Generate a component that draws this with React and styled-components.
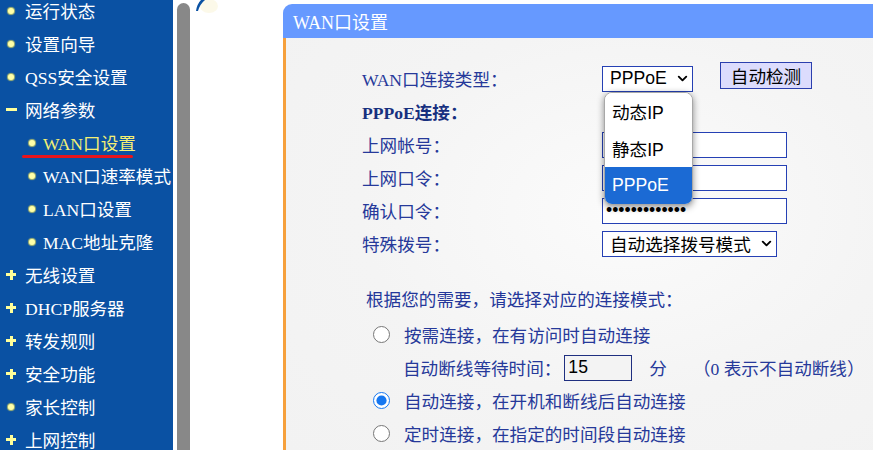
import React from "react";
import styled, {createGlobalStyle} from "styled-components";
import {ChevronDown} from "lucide-react";

const serif = `"Liberation Serif", "Noto Sans CJK SC", serif`;
const sans = `"Liberation Sans", "Noto Sans CJK SC", sans-serif`;

const menu = [
    {label: "运行状态", icon: "dot"},
    {label: "设置向导", icon: "dot"},
    {label: "QSS安全设置", icon: "dot"},
    {label: "网络参数", icon: "minus"},
    {label: "WAN口设置", icon: "dot", sub: true, active: true},
    {label: "WAN口速率模式", icon: "dot", sub: true},
    {label: "LAN口设置", icon: "dot", sub: true},
    {label: "MAC地址克隆", icon: "dot", sub: true},
    {label: "无线设置", icon: "plus"},
    {label: "DHCP服务器", icon: "plus"},
    {label: "转发规则", icon: "plus"},
    {label: "安全功能", icon: "plus"},
    {label: "家长控制", icon: "dot"},
    {label: "上网控制", icon: "plus"},
];

const fields = [
    {label: "上网帐号：", type: "text", value: ""},
    {label: "上网口令：", type: "password", value: "1234567890123"},
    {label: "确认口令：", type: "password", value: "1234567890123"},
];

const MenuIcon = ({kind}) => {
    if (kind === "plus") return <Plus/>;
    if (kind === "minus") return <Minus/>;
    return <Dot/>;
};

const App = () => {
    return (
        <>
            <GlobalStyle/>
            <Page>
                <Sidebar>
                    <Menu>
                        {menu.map((item) => (
                            <MenuItem key={item.label} $sub={item.sub} $active={item.active}>
                                <IconBox $sub={item.sub}>
                                    <MenuIcon kind={item.icon}/>
                                </IconBox>
                                {item.label}
                            </MenuItem>
                        ))}
                    </Menu>
                </Sidebar>
                <Main>
                    <Scrollbar/>
                    <Corner width="30" height="22" viewBox="0 0 30 22">
                        <ellipse cx="17" cy="6" rx="9" ry="7" fill="#fbf6df" opacity="0.7"/>
                        <path d="M13 0 Q8 4 6 11 L4 11 Q5 4 9 0 Z" fill="#0b52a3"/>
                    </Corner>
                    <Content>
                        <Panel>
                            <PanelHeader>WAN口设置</PanelHeader>
                            <PanelBody>
                                <Form>
                                    <Label>WAN口连接类型：</Label>
                                    <ControlRow>
                                        <SelectWrap>
                                            <SelectBox $width={91}>
                                                PPPoE
                                                <ChevronDown size={15} strokeWidth={3}/>
                                            </SelectBox>
                                            <Dropdown>
                                                <Option>动态IP</Option>
                                                <Option>静态IP</Option>
                                                <Option $selected>PPPoE</Option>
                                            </Dropdown>
                                        </SelectWrap>
                                        <Button>自动检测</Button>
                                    </ControlRow>

                                    <SectionTitle>PPPoE连接：</SectionTitle>

                                    {fields.map((f) => (
                                        <React.Fragment key={f.label}>
                                            <Label>{f.label}</Label>
                                            <ControlRow>
                                                <TextInput type={f.type} defaultValue={f.value} readOnly/>
                                            </ControlRow>
                                        </React.Fragment>
                                    ))}

                                    <Label>特殊拨号：</Label>
                                    <ControlRow>
                                        <SelectBox $width={175}>
                                            自动选择拨号模式
                                            <ChevronDown size={15} strokeWidth={3}/>
                                        </SelectBox>
                                    </ControlRow>
                                </Form>

                                <ModeSection>
                                    <Intro>根据您的需要，请选择对应的连接模式：</Intro>
                                    <RadioRow>
                                        <Radio type="radio" name="mode" readOnly/>
                                        按需连接，在有访问时自动连接
                                    </RadioRow>
                                    <DelayRow>
                                        自动断线等待时间：
                                        <DelayInput defaultValue="15" readOnly/>
                                        <Unit>分</Unit>
                                        <Hint>（0 表示不自动断线）</Hint>
                                    </DelayRow>
                                    <RadioRow>
                                        <Radio type="radio" name="mode" defaultChecked/>
                                        自动连接，在开机和断线后自动连接
                                    </RadioRow>
                                    <RadioRow>
                                        <Radio type="radio" name="mode" readOnly/>
                                        定时连接，在指定的时间段自动连接
                                    </RadioRow>
                                </ModeSection>
                            </PanelBody>
                        </Panel>
                    </Content>
                </Main>
            </Page>
        </>
    );
};

const GlobalStyle = createGlobalStyle`
  html, body {
    margin: 0;
    padding: 0;
    background: #fff;
    overflow: hidden;
  }

  body {
    font-family: ${serif};
  }
`;

const Page = styled.div`
  display: flex;
  width: 873px;
  height: 450px;
  overflow: hidden;
`;

const Sidebar = styled.nav`
  width: 173px;
  flex-shrink: 0;
  background-color: #0a51a3;
  overflow: hidden;
`;

const Menu = styled.ul`
  list-style: none;
  margin: -6px 0 0;
  padding: 0;
`;

const MenuItem = styled.li`
  position: relative;
  display: flex;
  align-items: center;
  height: 33px;
  padding-left: ${(p) => (p.$sub ? 25 : 4)}px;
  font-size: 17.6px;
  color: ${(p) => (p.$active ? "#f3ef74" : "#fff")};
  white-space: nowrap;

  &::after {
    content: "";
    display: ${(p) => (p.$active ? "block" : "none")};
    position: absolute;
    left: 22px;
    width: 111px;
    bottom: 1px;
    height: 3px;
    border-radius: 2px;
    background-color: #e8141c;
  }
`;

const IconBox = styled.span`
  display: flex;
  align-items: center;
  justify-content: center;
  width: 14px;
  margin-right: ${(p) => (p.$sub ? 4 : 7)}px;
`;

const Dot = styled.span`
  width: 6px;
  height: 6px;
  border-radius: 50%;
  background-color: #ffffa8;
  box-shadow: 0 0 1px 1px rgba(240, 230, 90, 0.7);
`;

const Minus = styled.span`
  width: 11px;
  height: 3px;
  background-color: #ffff9a;
`;

const Plus = styled.span`
  position: relative;
  width: 10px;
  height: 3px;
  background-color: #ffff9a;

  &::after {
    content: "";
    position: absolute;
    left: 3.5px;
    top: -3.5px;
    width: 3px;
    height: 10px;
    background-color: #ffff9a;
  }
`;

const Main = styled.div`
  position: relative;
  flex: 1;
  display: flex;
  background: #fff;
`;

const Scrollbar = styled.div`
  width: 13px;
  margin: 3px 0 0 4px;
  border-radius: 7px 7px 0 0;
  background-color: #888;
  flex-shrink: 0;
`;

const Corner = styled.svg`
  position: absolute;
  left: 19px;
  top: 0;
`;

const Content = styled.div`
  flex: 1;
  padding: 4px 0 0 93px;
  min-width: 0;
`;

const Panel = styled.section`
  display: flex;
  flex-direction: column;
  height: 100%;
  width: 620px;
`;

const PanelHeader = styled.div`
  height: 36px;
  display: flex;
  align-items: center;
  padding-left: 10px;
  background-color: #6699ff;
  border-top-left-radius: 9px;
  color: #fff;
  font-size: 18px;
`;

const PanelBody = styled.div`
  flex: 1;
  border-left: 3px solid #f6a03c;
  background: radial-gradient(ellipse at 55% 42%, #fbfbfb 0%, #f4f4f4 55%, #f2f2f2 100%);
  padding: 24px 0 0 76px;
  color: #26399a;
  font-size: 17.6px;
`;

const Form = styled.div`
  display: grid;
  grid-template-columns: 240px auto;
  grid-auto-rows: 33px;
  align-items: center;
`;

const Label = styled.div`
  white-space: nowrap;
`;

const SectionTitle = styled.div`
  grid-column: 1 / -1;
  font-weight: bold;
  color: #17307f;
`;

const ControlRow = styled.div`
  display: flex;
  align-items: center;
  height: 100%;
`;

const SelectWrap = styled.div`
  position: relative;
`;

const SelectBox = styled.div`
  box-sizing: border-box;
  display: flex;
  align-items: center;
  justify-content: space-between;
  width: ${(p) => p.$width}px;
  height: 26px;
  padding: 0 2px 0 7px;
  border: 1px solid #2540b4;
  background-color: #fff;
  font-family: ${sans};
  font-size: 17.6px;
  color: #000;
  white-space: nowrap;
`;

const Dropdown = styled.ul`
  position: absolute;
  z-index: 5;
  top: 26px;
  left: 2px;
  width: 87px;
  margin: 0;
  padding: 0;
  list-style: none;
  background-color: #fff;
  border: 1px solid #a8a8a8;
  border-radius: 8px;
  overflow: hidden;
  box-shadow: 0 2px 7px rgba(0, 0, 0, 0.45);
`;

const Option = styled.li`
  height: 37px;
  display: flex;
  align-items: center;
  padding-left: 7px;
  font-family: ${sans};
  font-size: 17.6px;
  color: ${(p) => (p.$selected ? "#fff" : "#000")};
  background-color: ${(p) => (p.$selected ? "#1b6ad4" : "#fff")};
`;

const Button = styled.button`
  align-self: flex-start;
  box-sizing: border-box;
  margin: 0 0 0 27px;
  width: 92px;
  height: 27px;
  padding: 0;
  border: 1.5px solid #2b3fae;
  background-color: #dcdcfd;
  font-family: ${sans};
  font-size: 17.6px;
  color: #000;
`;

const TextInput = styled.input`
  box-sizing: border-box;
  width: 185px;
  height: 26px;
  padding: 0 3px;
  border: 1px solid #2540b4;
  background-color: #fff;
  font-family: ${sans};
  font-size: 17.6px;
  color: #000;
  outline: none;
`;

const ModeSection = styled.div`
  margin-top: 22px;
  display: flex;
  flex-direction: column;
`;

const Intro = styled.div`
  height: 33px;
  display: flex;
  align-items: center;
  padding-left: 4px;
  margin-bottom: 3px;
  color: #24379a;
`;

const RadioRow = styled.label`
  height: 33px;
  display: flex;
  align-items: center;
  padding-left: 10px;
  white-space: nowrap;
`;

const Radio = styled.input`
  width: 17px;
  height: 17px;
  margin: 0 14px 0 1px;
  accent-color: #1677f0;
`;

const DelayRow = styled.div`
  height: 33px;
  display: flex;
  align-items: center;
  padding-left: 41px;
  white-space: nowrap;
`;

const DelayInput = styled.input`
  box-sizing: border-box;
  width: 68px;
  height: 26px;
  margin-left: 3px;
  padding: 0 3px;
  border: 1px solid #1f2f80;
  background-color: #f3f3f3;
  font-family: ${sans};
  font-size: 17.6px;
  color: #000;
  outline: none;
`;

const Unit = styled.span`
  margin-left: 17px;
`;

const Hint = styled.span`
  margin-left: 26px;
`;

export default App;
